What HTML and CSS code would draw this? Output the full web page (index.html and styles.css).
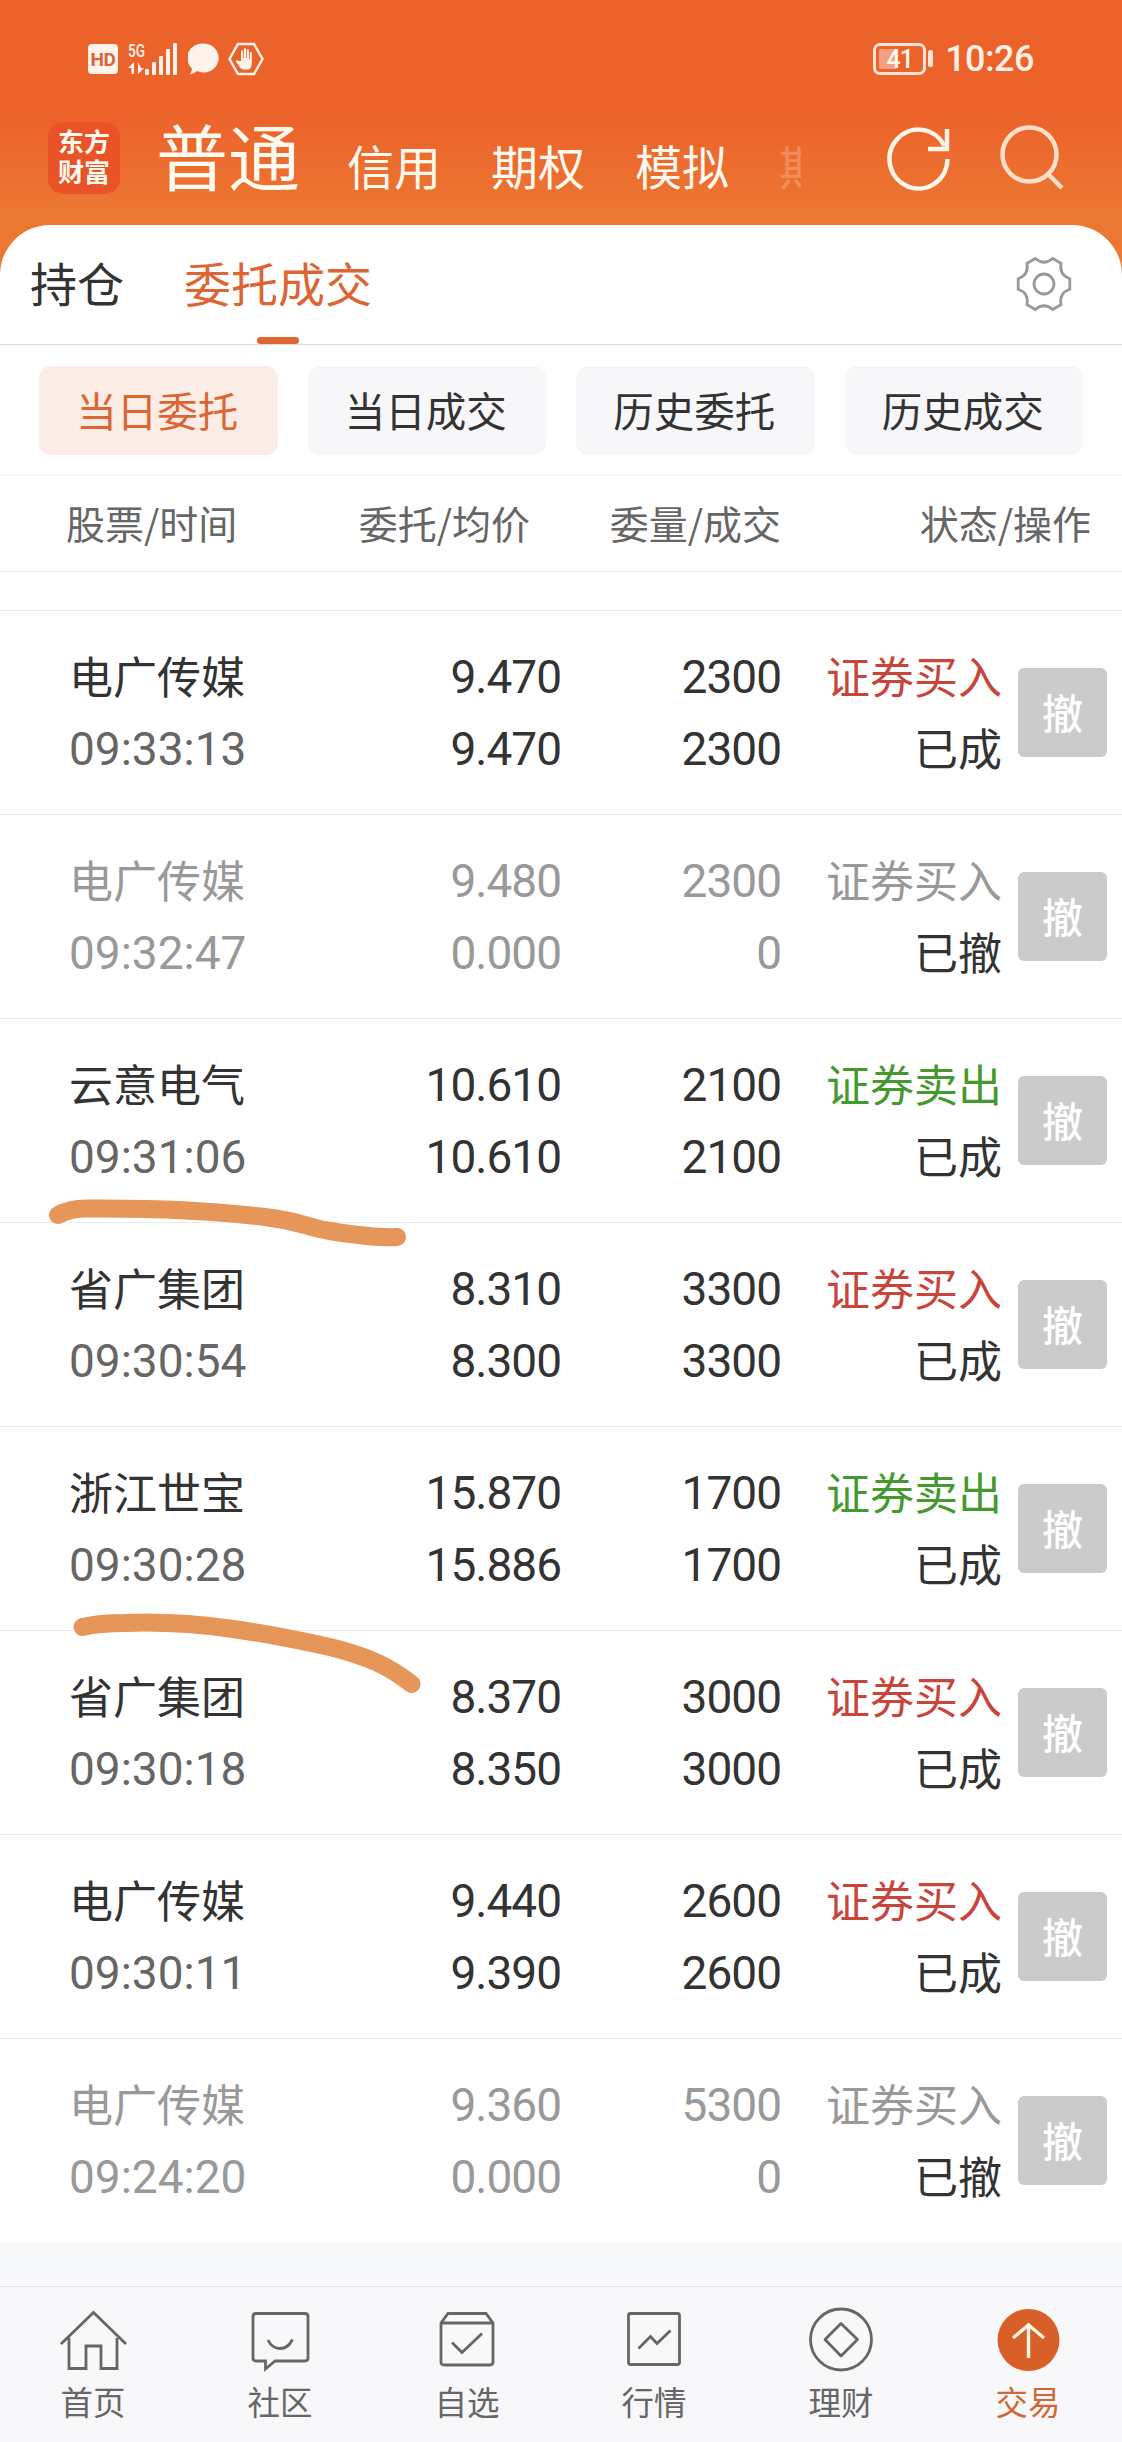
FILE: index.html
```html
<!DOCTYPE html>
<html lang="zh-CN">
<head>
    <meta charset="UTF-8">
    <title>委托成交</title>
    <link rel="stylesheet" href="styles.css">
</head>
<body>

<header class="header">
    <div class="status-bar">
        <div class="status-left">
            <span class="hd">HD</span>
            <svg class="signal" width="52" height="34" viewBox="0 0 52 34">
                <text x="0" y="15" class="signal-text" textLength="17" lengthAdjust="spacingAndGlyphs">5G</text>
                <path d="M6 20v12H3.5v-6H0zM10 20v12l6-6h-3z"/>
                <rect x="17" y="27" width="4" height="6" rx="1"/>
                <rect x="24" y="20" width="4" height="13" rx="1"/>
                <rect x="31" y="14" width="4" height="19" rx="1"/>
                <rect x="38" y="7" width="4" height="26" rx="1"/>
                <rect x="45" y="1" width="4" height="32" rx="1"/>
            </svg>
            <svg class="bubble" width="32" height="32" viewBox="0 0 32 32">
                <path d="M16 0.500a15 14.500 0 1 1-7 27.500q-3 3-7.500 3.500 2.500-3 2.500-6A15 14.500 0 0 1 16 .5z"/>
            </svg>
            <svg class="hand" width="36" height="34" viewBox="0 0 36 34">
                <path class="hex" d="M10 2h16l8.500 15L26 32H10L1.500 17z"/>
                <path d="M13 19V9.500q0-1.200 1-1.200t1 1.200V16h.8V7.500q0-1.200 1.200-1.200t1.200 1.200V16h.8V8.500q0-1.200 1-1.200t1 1.200V17h.8v-6q0-1 1-1t1 1v10q0 5-3 6.500h-6q-2.500-1-4.500-4.500l-2.800-4q1.500-1.600 3.200 0z"/>
            </svg>
        </div>
        <div class="status-right">
            <div class="battery"><span class="battery-level"></span><span class="battery-text">41</span></div>
            <span class="battery-cap"></span>
            <span class="clock">10:26</span>
        </div>
    </div>

    <div class="nav">
        <div class="logo">东方<br>财富</div>
        <span class="nav-main">普通</span>
        <div class="nav-list">
            <span>信用</span>
            <span>期权</span>
            <span>模拟</span>
            <span class="nav-faded">期</span>
        </div>
        <svg class="refresh" width="64" height="66" viewBox="0 0 64 66">
            <path d="M60.500 34A29 29.500 0 1 1 57.500 21"/>
            <path class="arrow" d="M60 4v20H41"/>
        </svg>
        <svg class="search" width="66" height="66" viewBox="0 0 66 66">
            <circle cx="29.500" cy="30.500" r="27"/>
            <path d="M48 50l14 14"/>
        </svg>
    </div>
</header>

<main class="panel">
    <div class="tabs">
        <span class="tab">持仓</span>
        <span class="tab active">委托成交</span>
        <svg class="gear" width="60" height="60" viewBox="-30 -30 60 60">
            <path d="M-8.600-25.500Q0-18 8.600-25.500L17-20.700Q15-9 25.800-5.300V5.300Q15 9 17 20.700L8.600 25.500Q0 18-8.600 25.500L-17 20.700Q-15 9-25.800 5.300V-5.300Q-15-9-17-20.700Z"/>
            <circle r="10"/>
        </svg>
    </div>

    <div class="filters">
        <span class="filter selected">当日委托</span>
        <span class="filter">当日成交</span>
        <span class="filter">历史委托</span>
        <span class="filter">历史成交</span>
    </div>

    <div class="list-head">
        <span>股票/时间</span>
        <span class="right">委托/均价</span>
        <span class="right">委量/成交</span>
        <span class="right">状态/操作</span>
    </div>

    <div class="orders">
        <div class="order">
            <div class="stock"><p>电广传媒</p><p class="time">09:33:13</p></div>
            <div class="num"><p>9.470</p><p>9.470</p></div>
            <div class="num"><p>2300</p><p>2300</p></div>
            <div class="state"><p class="buy">证券买入</p><p>已成</p></div>
            <button class="cancel">撤</button>
        </div>
        <div class="order revoked">
            <div class="stock"><p>电广传媒</p><p class="time">09:32:47</p></div>
            <div class="num"><p>9.480</p><p>0.000</p></div>
            <div class="num"><p>2300</p><p>0</p></div>
            <div class="state"><p class="buy">证券买入</p><p>已撤</p></div>
            <button class="cancel">撤</button>
        </div>
        <div class="order">
            <div class="stock"><p>云意电气</p><p class="time">09:31:06</p></div>
            <div class="num"><p>10.610</p><p>10.610</p></div>
            <div class="num"><p>2100</p><p>2100</p></div>
            <div class="state"><p class="sell">证券卖出</p><p>已成</p></div>
            <button class="cancel">撤</button>
        </div>
        <div class="order">
            <div class="stock"><p>省广集团</p><p class="time">09:30:54</p></div>
            <div class="num"><p>8.310</p><p>8.300</p></div>
            <div class="num"><p>3300</p><p>3300</p></div>
            <div class="state"><p class="buy">证券买入</p><p>已成</p></div>
            <button class="cancel">撤</button>
        </div>
        <div class="order">
            <div class="stock"><p>浙江世宝</p><p class="time">09:30:28</p></div>
            <div class="num"><p>15.870</p><p>15.886</p></div>
            <div class="num"><p>1700</p><p>1700</p></div>
            <div class="state"><p class="sell">证券卖出</p><p>已成</p></div>
            <button class="cancel">撤</button>
        </div>
        <div class="order">
            <div class="stock"><p>省广集团</p><p class="time">09:30:18</p></div>
            <div class="num"><p>8.370</p><p>8.350</p></div>
            <div class="num"><p>3000</p><p>3000</p></div>
            <div class="state"><p class="buy">证券买入</p><p>已成</p></div>
            <button class="cancel">撤</button>
        </div>
        <div class="order">
            <div class="stock"><p>电广传媒</p><p class="time">09:30:11</p></div>
            <div class="num"><p>9.440</p><p>9.390</p></div>
            <div class="num"><p>2600</p><p>2600</p></div>
            <div class="state"><p class="buy">证券买入</p><p>已成</p></div>
            <button class="cancel">撤</button>
        </div>
        <div class="order revoked">
            <div class="stock"><p>电广传媒</p><p class="time">09:24:20</p></div>
            <div class="num"><p>9.360</p><p>0.000</p></div>
            <div class="num"><p>5300</p><p>0</p></div>
            <div class="state"><p class="buy">证券买入</p><p>已撤</p></div>
            <button class="cancel">撤</button>
        </div>

        <!-- marker strokes over the list -->
        <svg class="marks" width="1122" height="1632" viewBox="0 610 1122 1632">
            <path d="M58 1215C66 1211 76 1208.600 86 1208.600C150 1208 215 1211 265 1217C300 1221 305 1227 330 1231C355 1235 380 1238 397 1237"/>
            <path d="M82.500 1627C95 1624 104 1623 125 1623C200 1620 270 1634 330 1647C370 1657 390 1667 411.500 1684"/>
        </svg>
    </div>
</main>

<nav class="tabbar">
    <div class="item">
        <svg width="72" height="72" viewBox="0 0 72 72">
            <path d="M4 42L36.500 10.500 69 42M12 36v30.500h17V44h15v22.500h16V36"/>
        </svg>
        <span>首页</span>
    </div>
    <div class="item">
        <svg width="72" height="72" viewBox="0 0 72 72">
            <path d="M12 11.500h49q3 0 3 3V56q0 3-3 3H31l-9.500 8V59H12q-3 0-3-3V14.500q0-3 3-3z"/>
            <path d="M24 38q4 8.500 12 8.500t12.500-9"/>
        </svg>
        <span>社区</span>
    </div>
    <div class="item">
        <svg width="72" height="72" viewBox="0 0 72 72">
            <path d="M10 21l7-9.500h38l7 9.500v39q0 3-3 3H13q-3 0-3-3zM10 21h52"/>
            <path d="M21 40.500l10 10 20-19"/>
        </svg>
        <span>自选</span>
    </div>
    <div class="item">
        <svg width="72" height="72" viewBox="0 0 72 72">
            <rect x="10.500" y="11.500" width="51" height="51" rx="2"/>
            <path d="M20.500 46.500l12-12 6.500 7L52.500 28.500"/>
        </svg>
        <span>行情</span>
    </div>
    <div class="item">
        <svg width="72" height="72" viewBox="0 0 72 72">
            <circle cx="36" cy="37.500" r="30.500"/>
            <path stroke-linejoin="round" d="M36 21.500L52.500 37.500 36 54 20 37.500z"/>
        </svg>
        <span>理财</span>
    </div>
    <div class="item current">
        <svg width="72" height="72" viewBox="0 0 72 72">
            <circle class="disc" cx="36.500" cy="38" r="31"/>
            <path class="up" d="M36.500 56V23M21 36l15.500-13L52 36"/>
        </svg>
        <span>交易</span>
    </div>
</nav>

</body>
</html>
```
FILE: styles.css
```css
* {
    box-sizing: border-box;
}

body {
    margin: 0;
    width: 1122px;
    height: 2442px;
    display: flex;
    flex-direction: column;
    background: #f7f8fa;
    color: #333;
    font-family: "Noto Sans CJK SC", sans-serif;
    overflow: hidden;
}

p {
    margin: 0;
}

svg {
    display: block;
    flex: none;
}

/* header */
.header {
    height: 277px;
    flex: none;
    background: linear-gradient(#ec622b 0, #ec622b 112px, #ec7733 215px, #ec7733 100%);
    color: #fffaf0;
}

.status-bar {
    height: 110px;
    padding: 7px 88px 0;
    display: flex;
    justify-content: space-between;
    align-items: center;
}

.status-left,
.status-right {
    display: flex;
    align-items: center;
}

.status-left svg {
    fill: #fff3ec;
}

.hd {
    width: 30px;
    height: 30px;
    border-radius: 4px;
    background: #fff3ec;
    color: #d5653a;
    font: bold 19px/31px Roboto, sans-serif;
    text-align: center;
    letter-spacing: -0.5px;
}

.signal {
    margin-left: 10px;
}

.signal-text {
    font: 500 19px Roboto, sans-serif;
}

.bubble {
    margin-left: 8px;
}

.hand {
    margin-left: 8px;
}

.hand .hex {
    fill: none;
    stroke: #fff3ec;
    stroke-width: 2.4;
}

.battery {
    position: relative;
    width: 53px;
    height: 32px;
    border: 3px solid #ffe3d4;
    border-radius: 7px;
}

.battery-level {
    position: absolute;
    left: 3px;
    top: 3px;
    width: 18px;
    height: 20px;
    border-radius: 2px;
    background: #f4a080;
}

.battery-text {
    position: absolute;
    left: 0;
    top: 0;
    width: 47px;
    font: 500 25px/27px Roboto, sans-serif;
    letter-spacing: -1px;
    text-align: center;
}

.battery-cap {
    width: 5px;
    height: 17px;
    margin-left: 2px;
    border-radius: 2px;
    background: #ffe3d4;
}

.clock {
    margin-left: 12px;
    font: 500 36px/40px Roboto, sans-serif;
    letter-spacing: -0.5px;
    color: #fff0e6;
}

.nav {
    height: 115px;
    padding-left: 48px;
    display: flex;
}

.logo {
    width: 72px;
    height: 72px;
    margin-top: 12px;
    padding-top: 4px;
    border-radius: 15px;
    background: #ea5327;
    font-size: 26px;
    font-weight: 700;
    line-height: 30px;
    text-align: center;
}

.nav-main {
    margin-left: 36px;
    font-size: 72px;
    line-height: 88px;
}

.nav-list {
    width: 456px;
    margin-left: 47px;
    display: flex;
    gap: 50px;
    overflow: hidden;
    font-size: 47px;
    line-height: 109px;
    white-space: nowrap;
}

.nav-faded {
    width: 22px;
    flex: none;
    overflow: hidden;
    opacity: 0.22;
}

.refresh,
.search {
    fill: none;
    stroke: #fff6e8;
    stroke-width: 4.5;
}

.refresh {
    margin: 15px 0 0 84px;
}

.search {
    margin: 14px 0 0 49px;
    stroke: #ffdfc8;
}

/* panel */
.panel {
    margin-top: -52px;
    flex: none;
    background: #fff;
    border-radius: 50px 50px 0 0;
}

.tabs {
    height: 120px;
    padding: 0 48px 0 30px;
    display: flex;
    border-bottom: 1px solid #dcdcdc;
    font-size: 47px;
    line-height: 114px;
}

.tab.active {
    position: relative;
    margin-left: 60px;
    color: #dc6533;
}

.tab.active::after {
    content: "";
    position: absolute;
    left: 50%;
    bottom: 0;
    width: 42px;
    height: 7px;
    margin-left: -21px;
    border-radius: 4px;
    background: #dc6533;
}

.gear {
    margin: 29px 0 0 auto;
    fill: none;
    stroke: #999;
    stroke-width: 2.8;
}

.filters {
    height: 131px;
    padding: 21px 39px 0;
    display: grid;
    grid-template-columns: repeat(4, 1fr);
    gap: 30px;
    border-bottom: 1px solid #f3f3f3;
}

.filter {
    height: 89px;
    padding-right: 2px;
    border-radius: 12px;
    background: #f7f7fa;
    font-size: 40.5px;
    line-height: 87px;
    text-align: center;
}

.filter.selected {
    background: #fbede6;
    color: #dc6533;
}

.list-head {
    height: 96px;
    padding-left: 66px;
    display: grid;
    grid-template-columns: 200px 264px 251px 310px;
    border-bottom: 1px solid #ececec;
    color: #666;
    font-size: 39px;
    line-height: 92px;
    white-space: nowrap;
}

.right {
    text-align: right;
}

/* orders */
.orders {
    position: relative;
    padding-top: 38px;
}

.order {
    height: 204px;
    padding: 0 15px 0 69px;
    display: grid;
    grid-template-columns: 250px 242px 220px 221px 105px;
    align-items: center;
    border-top: 1px solid #ececec;
    font-size: 44px;
    line-height: 68px;
}

.order p {
    height: 72px;
}

.order .time,
.num {
    font-family: Roboto, sans-serif;
    font-size: 46px;
    line-height: 72px;
    letter-spacing: -1px;
}

.order .time {
    color: #666;
    letter-spacing: 0;
}

.num,
.state {
    text-align: right;
}

.buy {
    color: #c8453b;
}

.sell {
    color: #45992f;
}

.revoked,
.revoked .time,
.revoked .buy {
    color: #999;
}

.revoked .state {
    color: #333;
}

.cancel {
    justify-self: end;
    width: 89px;
    height: 89px;
    padding: 0 0 2px;
    border: none;
    border-radius: 6px;
    background: #cbcbcb;
    color: #fff;
    font-family: inherit;
    font-size: 41px;
    font-weight: 500;
    line-height: 87px;
}

.marks {
    position: absolute;
    left: 0;
    top: 38px;
    fill: none;
    stroke: #e59658;
    stroke-width: 18;
    stroke-linecap: round;
}

/* bottom bar */
.tabbar {
    height: 156px;
    margin-top: auto;
    flex: none;
    display: grid;
    grid-template-columns: repeat(6, 1fr);
    border-top: 1px solid #e2e2e4;
    background: #f8f8fa;
    color: #666;
}

.item {
    padding: 15px 1px 0 0;
    display: flex;
    flex-direction: column;
    align-items: center;
    font-size: 32.5px;
    line-height: 54px;
}

.item svg {
    fill: none;
    stroke: #666;
    stroke-width: 2.8;
}

.item.current {
    color: #cf6835;
}

.item .disc {
    fill: #d85f27;
    stroke: none;
}

.item .up {
    stroke: #fff3e2;
    stroke-width: 3.4;
}
```
